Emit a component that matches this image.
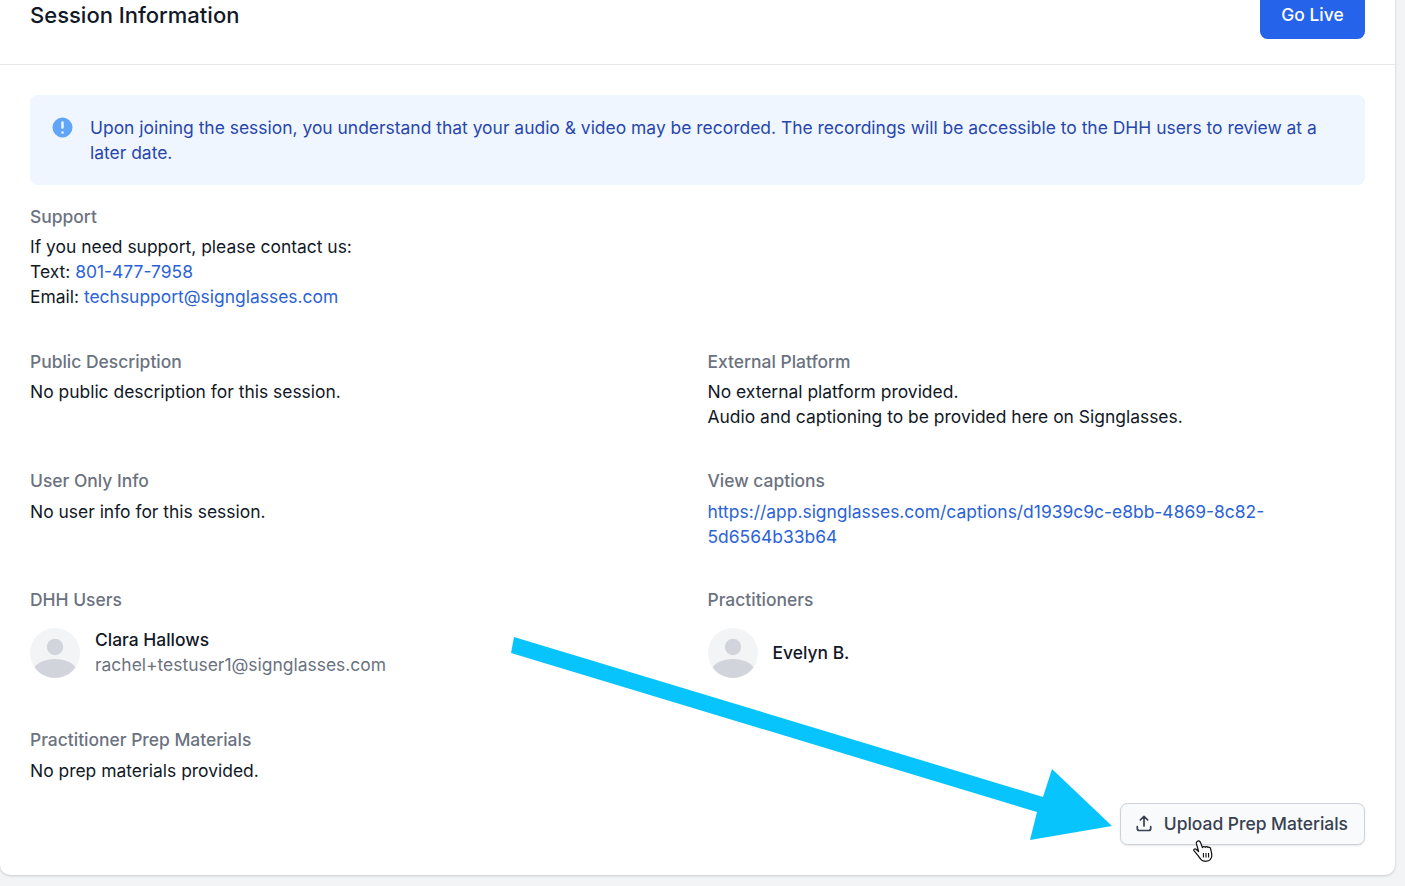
<div class="page">
  <section class="card">
    <header class="head">
      <h2>Session Information</h2>
      <button class="live">Go Live</button>
    </header>
    <div class="body">
      <div class="alert">
        <svg class="alert-icon" viewBox="0 0 20 20" width="25" height="25" aria-hidden="true">
          <path fill="#60a5fa" fill-rule="evenodd" d="M18 10a8 8 0 1 1-16 0 8 8 0 0 1 16 0zm-8-5a1 1 0 0 0-1 1v4a1 1 0 1 0 2 0V6a1 1 0 0 0-1-1zm0 8a1 1 0 1 0 0 2 1 1 0 0 0 0-2z"/>
        </svg>
        <p>Upon joining the session, you understand that your audio &amp; video may be recorded. The recordings will be accessible to the DHH users to review at a later date.</p>
      </div>

      <div class="block support">
        <div class="label">Support</div>
        <div class="value">
          If you need support, please contact us:<br />
          Text: <a href="#top">801-477-7958</a><br />
          Email: <a href="#top">techsupport@signglasses.com</a>
        </div>
      </div>

      <div class="grid">
        <div class="block">
          <div class="label">Public Description</div>
          <div class="value">No public description for this session.</div>
        </div>
        <div class="block">
          <div class="label">External Platform</div>
          <div class="value">No external platform provided.<br />Audio and captioning to be provided here on Signglasses.</div>
        </div>
        <div class="block">
          <div class="label">User Only Info</div>
          <div class="value">No user info for this session.</div>
        </div>
        <div class="block">
          <div class="label">View captions</div>
          <div class="value"><a href="#top">https://app.signglasses.com/captions/d1939c9c-e8bb-4869-8c82-5d6564b33b64</a></div>
        </div>
        <div class="block">
          <div class="label">DHH Users</div>
          <div class="person">
            <svg class="avatar" viewBox="0 0 50 50" aria-hidden="true">
              <defs><clipPath id="a1"><circle cx="25" cy="25" r="25"/></clipPath></defs>
              <g clip-path="url(#a1)">
                <rect width="50" height="50" fill="#f3f4f6"/>
                <circle cx="25" cy="19" r="8.2" fill="#d1d5db"/>
                <ellipse cx="25" cy="44" rx="22" ry="13" fill="#d1d5db"/>
              </g>
            </svg>
            <div>
              <div class="name">Clara Hallows</div>
              <div class="email">rachel+testuser1@signglasses.com</div>
            </div>
          </div>
        </div>
        <div class="block">
          <div class="label">Practitioners</div>
          <div class="person">
            <svg class="avatar" viewBox="0 0 50 50" aria-hidden="true">
              <defs><clipPath id="a2"><circle cx="25" cy="25" r="25"/></clipPath></defs>
              <g clip-path="url(#a2)">
                <rect width="50" height="50" fill="#f3f4f6"/>
                <circle cx="25" cy="19" r="8.2" fill="#d1d5db"/>
                <ellipse cx="25" cy="44" rx="22" ry="13" fill="#d1d5db"/>
              </g>
            </svg>
            <div class="name">Evelyn B.</div>
          </div>
        </div>
      </div>

      <div class="block prep">
        <div class="label">Practitioner Prep Materials</div>
        <div class="value">No prep materials provided.</div>
      </div>

      <div class="actions">
        <button class="upload">
          <svg viewBox="0 0 20 20" width="20" height="20" fill="none" stroke="#374151" stroke-width="1.7" stroke-linecap="round" stroke-linejoin="round" aria-hidden="true">
            <path d="M3.300 12.500v2a2 2 0 0 0 2 2h9.400a2 2 0 0 0 2-2v-2M10 12V2.500M6.300 6 10 2.300 13.700 6"/>
          </svg>
          Upload Prep Materials
        </button>
      </div>
    </div>
  </section>

  <svg class="overlay" width="1405" height="886" viewBox="0 0 1405 886" aria-hidden="true">
    <polygon fill="#08c4fd" points="514,637 1043,797 1052,769 1112,826 1030,840 1037,812 511,653" />
    <g transform="translate(1193 839.500) scale(1.12)">
      <path d="M4 1.500c1.200-.6 2.300 0 2.700 1.200l1.700 4.500c.2-1 2-1.200 2.500-.2.400-.9 2-.9 2.500.2.600-.6 2-.2 2.300.9l1 4.500c.4 2-.2 4-1.300 5.400-1.500 1.500-5.500 2-7.500.6-1.600-1.200-2.400-3-3.700-4.700L.8 10c-.6-1.100.8-2.200 1.900-1.300l2.300 2L3 3.500c-.2-.8.300-1.600 1-2z" fill="#fff" stroke="#111" stroke-width="1.100" stroke-linejoin="round"/>
      <path d="M9.300 12v4M11.600 12v4M13.900 12v4" stroke="#111" stroke-width="1" fill="none"/>
    </g>
  </svg>
</div>

<style>
  :global(body) {
    margin: 0;
    background: #f3f4f6;
    font-family: Inter, "Liberation Sans", sans-serif;
    overflow: hidden;
  }
  .page {
    height: 886px;
    overflow: hidden;
    position: relative;
  }
  .card {
    box-sizing: border-box;
    width: 1395px;
    margin-top: -9px;
    background: #fff;
    border-radius: 0 0 10px 10px;
    box-shadow: 0 1px 3px rgba(0, 0, 0, 0.15), 0 0 2px rgba(0, 0, 0, 0.08);
  }
  .head {
    display: flex;
    justify-content: space-between;
    align-items: center;
    padding: 0 30px 25px;
    border-bottom: 1px solid #e5e7eb;
  }
  h2 {
    margin: 0 0 1px;
    font-size: 22px;
    line-height: 30px;
    font-weight: 500;
    color: #111827;
  }
  .live {
    width: 105px;
    height: 48px;
    padding: 0;
    border: 0;
    border-radius: 7.5px;
    background: #2563eb;
    color: #fff;
    font: 500 17.45px/24.85px Inter, "Liberation Sans", sans-serif;
  }
  .body {
    padding: 30px;
  }
  .alert {
    display: flex;
    gap: 15px;
    padding: 20px;
    border-radius: 7.5px;
    background: #eff6ff;
  }
  .alert-icon {
    flex: none;
  }
  .alert p {
    margin: 0;
    font-size: 17.45px;
    line-height: 25px;
    color: #2847ab;
  }
  .support {
    margin-top: 19.5px;
  }
  .label {
    font-size: 17.45px;
    line-height: 24.85px;
    font-weight: 500;
    color: #6b7280;
  }
  .value {
    margin-top: 6px;
    font-size: 17.45px;
    line-height: 24.85px;
    color: #111827;
  }
  a {
    color: #2b63d6;
    text-decoration: none;
  }
  .grid {
    display: grid;
    grid-template-columns: 1fr 1fr;
    column-gap: 20px;
    row-gap: 38.75px;
    margin-top: 39.75px;
  }
  .person {
    display: flex;
    align-items: center;
    gap: 15px;
    margin-top: 15px;
    font-size: 17.45px;
    line-height: 24.85px;
  }
  .avatar {
    display: block;
    flex: none;
    width: 50px;
    height: 50px;
  }
  .name {
    font-weight: 500;
    color: #111827;
  }
  .email {
    color: #6b7280;
  }
  .prep {
    margin-top: 49.7px;
  }
  .actions {
    display: flex;
    justify-content: flex-end;
    margin-top: 20px;
  }
  .upload {
    display: flex;
    align-items: center;
    gap: 9.5px;
    box-sizing: border-box;
    height: 42px;
    padding: 0 16px 0 13px;
    border: 1px solid #cdd1d8;
    border-radius: 7.5px;
    background: #f9fafb;
    box-shadow: 0 1px 2px rgba(0, 0, 0, 0.1);
    color: #374151;
    font: 500 17.45px/24.85px Inter, "Liberation Sans", sans-serif;
  }
  .overlay {
    position: absolute;
    inset: 0;
    pointer-events: none;
  }
</style>
